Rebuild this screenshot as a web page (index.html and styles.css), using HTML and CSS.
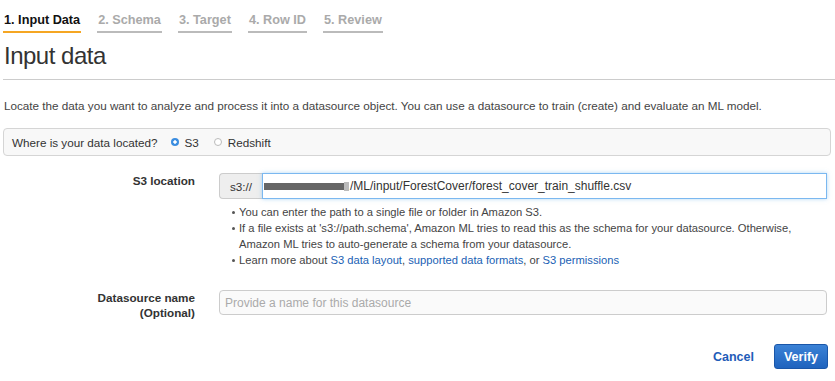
FILE: index.html
```html
<!DOCTYPE html>
<html>
<head>
<meta charset="utf-8">
<link rel="stylesheet" href="styles.css">
</head>
<body>
<div class="page">
  <nav class="steps">
    <span class="step active">1. Input Data</span>
    <span class="step">2. Schema</span>
    <span class="step">3. Target</span>
    <span class="step">4. Row ID</span>
    <span class="step">5. Review</span>
  </nav>
  <h1 class="title">Input data</h1>
  <p class="intro">Locate the data you want to analyze and process it into a datasource object. You can use a datasource to train (create) and evaluate an ML model.</p>
  <div class="source-box">
    <span class="source-q">Where is your data located?</span>
    <label class="radio"><span class="dot checked"></span>S3</label>
    <label class="radio"><span class="dot"></span>Redshift</label>
  </div>
  <div class="row row-s3">
    <div class="label">S3 location</div>
    <div class="field">
      <div class="input-group">
        <span class="addon">s3://</span>
        <div class="input focus"><span class="redact"></span><span class="redact-tail"></span>/ML/input/ForestCover/forest_cover_train_shuffle.csv</div>
      </div>
      <ul class="help">
        <li>You can enter the path to a single file or folder in Amazon S3.</li>
        <li>If a file exists at 's3://path.schema', Amazon ML tries to read this as the schema for your datasource. Otherwise, Amazon ML tries to auto-generate a schema from your datasource.</li>
        <li>Learn more about <a>S3 data layout</a>, <a>supported data formats</a>, or <a>S3 permissions</a></li>
      </ul>
    </div>
  </div>
  <div class="row row-name">
    <div class="label">Datasource name<br>(Optional)</div>
    <div class="field">
      <div class="input plain placeholder">Provide a name for this datasource</div>
    </div>
  </div>
  <div class="actions">
    <span class="cancel">Cancel</span>
    <span class="verify">Verify</span>
  </div>
</div>
</body>
</html>
```
FILE: styles.css
```css
* { box-sizing: border-box; }
html, body { margin: 0; padding: 0; background: #fff; }
body {
  font-family: "Liberation Sans", Arial, sans-serif;
  font-size: 11.7px;
  color: #444;
}
.page { padding: 0 0 0 3px; }
.steps {
  display: flex;
  gap: 16px;
  padding-top: 13px;
}
.step {
  font-weight: bold;
  font-size: 12.7px;
  color: #aaa;
  padding: 0 1px 3px 1px;
  border-bottom: 2px solid #bbb;
  line-height: 15px;
}
.step.active { color: #111; border-bottom-color: #f5a623; }
.title {
  margin: 9px 0 0 0;
  padding: 0 0 9px 1px;
  font-size: 24px;
  letter-spacing: -0.5px;
  font-weight: normal;
  color: #333;
  line-height: 28px;
  border-bottom: 1px solid #ccc;
}
.intro {
  margin: 18px 0 0 1px;
  line-height: 15px;
  color: #444;
}
.source-box {
  margin: 15px 4px 0 0;
  height: 28px;
  border: 1px solid #d5d5d5;
  border-radius: 4px;
  background: #f8f8f8;
  display: flex;
  align-items: center;
  padding: 0 0 0 8px;
  color: #333;
}
.source-q { margin-right: 13px; }
.radio { display: flex; align-items: center; margin-right: 15px; }
.dot {
  width: 8px; height: 8px;
  border-radius: 50%;
  border: 1px solid #bbb;
  background: #fff;
  margin-right: 6px;
}
.dot.checked {
  border: none;
  background: radial-gradient(circle, #fff 0 1.4px, #3b8de0 2px);
}
.row { display: flex; }
.label {
  width: 192px;
  text-align: right;
  font-weight: bold;
  color: #333;
  line-height: 15px;
  flex: none;
}
.field { margin-left: 24px; flex: 1; margin-right: 8px; }
.row-s3 { margin-top: 17px; }
.input-group { display: flex; height: 26px; }
.addon {
  width: 43px;
  background: #eee;
  border: 1px solid #ccc;
  border-right: none;
  border-radius: 4px 0 0 4px;
  display: flex;
  align-items: center;
  justify-content: center;
  color: #333;
}
.input {
  flex: 1;
  height: 26px;
  display: flex;
  align-items: center;
  padding-left: 9px;
  color: #333;
  font-size: 12px;
}
.input.focus {
  border: 1px solid #7bb8f0;
  box-shadow: 0 0 4px rgba(102,175,233,0.5);
  padding-left: 1px;
}
.redact {
  display: inline-block;
  width: 80px;
  height: 7px;
  background: #666;
}
.redact-tail {
  display: inline-block;
  width: 5px;
  height: 9px;
  background: #bbb;
  margin-right: 1px;
}
.help {
  margin: 5px 0 0 0;
  padding: 0 0 0 20px;
  list-style: none;
  color: #444;
  font-size: 11.2px;
  line-height: 16px;
}
.help li { position: relative; }
.help li::before {
  content: "";
  position: absolute;
  left: -7px; top: 7px;
  width: 3px; height: 3px;
  border-radius: 50%;
  background: #555;
}
.help a { color: #1a5fb4; text-decoration: none; }
.row-name { margin-top: 22px; }
.input.plain {
  border: 1px solid #ccc;
  border-radius: 4px;
  background: #fafafa;
  height: 25px;
  padding-left: 5px;
}
.placeholder { color: #aaa; }
.actions {
  display: flex;
  justify-content: flex-end;
  align-items: center;
  margin: 24px 7px 0 0;
}
.cancel {
  color: #1f5cb8;
  font-weight: bold;
  font-size: 12.5px;
  margin-right: 20px;
}
.verify {
  width: 54px;
  height: 25px;
  border-radius: 3px;
  background: linear-gradient(#3b82d6, #1f63be);
  border: 1px solid #1a56a8;
  color: #fff;
  font-weight: bold;
  font-size: 12.5px;
  display: flex;
  align-items: center;
  justify-content: center;
}
```
